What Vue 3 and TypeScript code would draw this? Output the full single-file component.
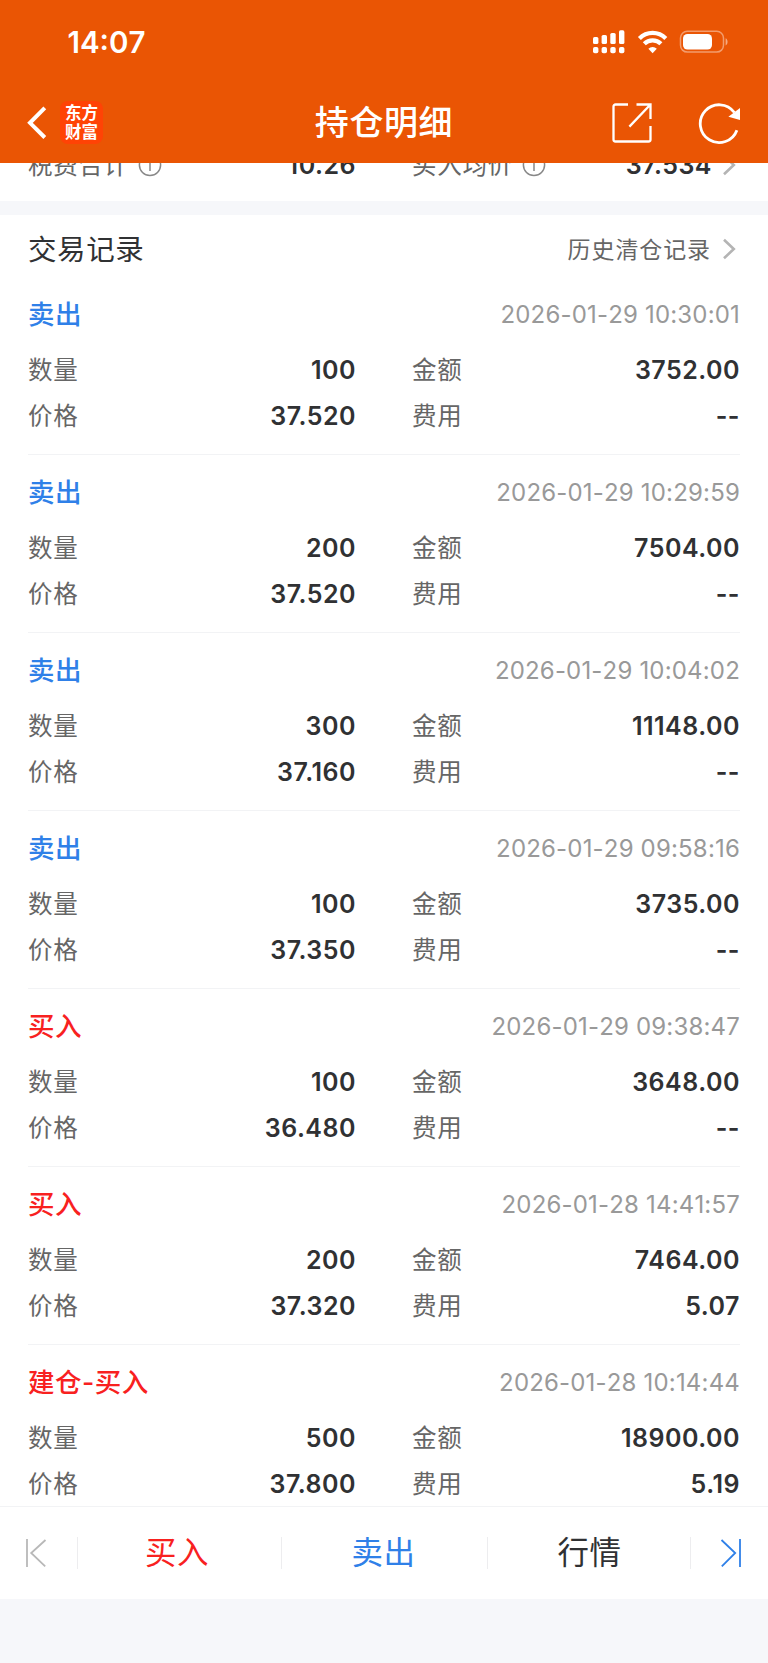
<script setup lang="ts">
interface Trade {
  title: string
  side: 'sell' | 'buy'
  time: string
  quantity: string
  amount: string
  price: string
  fee: string
}

const trades: Trade[] = [
  { title: '卖出', side: 'sell', time: '2026-01-29 10:30:01', quantity: '100', amount: '3752.00', price: '37.520', fee: '--' },
  { title: '卖出', side: 'sell', time: '2026-01-29 10:29:59', quantity: '200', amount: '7504.00', price: '37.520', fee: '--' },
  { title: '卖出', side: 'sell', time: '2026-01-29 10:04:02', quantity: '300', amount: '11148.00', price: '37.160', fee: '--' },
  { title: '卖出', side: 'sell', time: '2026-01-29 09:58:16', quantity: '100', amount: '3735.00', price: '37.350', fee: '--' },
  { title: '买入', side: 'buy', time: '2026-01-29 09:38:47', quantity: '100', amount: '3648.00', price: '36.480', fee: '--' },
  { title: '买入', side: 'buy', time: '2026-01-28 14:41:57', quantity: '200', amount: '7464.00', price: '37.320', fee: '5.07' },
  { title: '建仓-买入', side: 'buy', time: '2026-01-28 10:14:44', quantity: '500', amount: '18900.00', price: '37.800', fee: '5.19' },
]
</script>

<template>
  <div class="screen">
    <header class="header">
      <div class="status">
        <span class="clock">14:07</span>
        <svg class="status-icons" width="138" height="26" viewBox="0 0 138 26" fill="#fff">
          <rect x="1" y="8" width="5.4" height="7" rx="1.6" />
          <rect x="9.6" y="6" width="5.4" height="9" rx="1.6" />
          <rect x="18.3" y="4" width="5.4" height="11" rx="1.6" />
          <rect x="27" y="1.3" width="5.4" height="13.7" rx="1.6" />
          <rect x="1" y="18" width="5.4" height="6.3" rx="1.8" />
          <rect x="9.6" y="18" width="5.4" height="6.3" rx="1.8" />
          <rect x="18.3" y="18" width="5.4" height="6.3" rx="1.8" />
          <rect x="27" y="18" width="5.4" height="6.3" rx="1.8" />
          <g fill="none" stroke="#fff" stroke-width="4.2">
            <path d="M47.4 9.4a18.6 18.6 0 0 1 26.4 0" />
            <path d="M52.3 14.8a11.7 11.7 0 0 1 16.6 0" />
          </g>
          <path d="M56.4 19.8a6 6 0 0 1 8.4 0l-4.2 4.4z" />
          <rect x="88.5" y="2.3" width="43" height="20.8" rx="6.8" fill="none" stroke="#fff" stroke-opacity=".42" stroke-width="1.5" />
          <rect x="91" y="5" width="29" height="15.5" rx="4.5" />
          <path d="M133.6 9.2c2.6 1.2 2.6 6 0 7.2z" opacity=".5" />
        </svg>
      </div>
      <div class="nav">
        <div class="nav-left">
          <svg width="20" height="34" viewBox="0 0 20 34" fill="none" stroke="#fff" stroke-width="4">
            <path d="M17.8 1.8 3 16.8l14.8 14.7" />
          </svg>
          <div class="brand"><span>东方</span><span>财富</span></div>
        </div>
        <h1 class="title">持仓明细</h1>
        <div class="nav-right">
          <svg width="42" height="42" viewBox="0 0 42 42" fill="none" stroke="#fff" stroke-width="2.3">
            <path d="M17 2.5H4.5a2 2 0 0 0-2 2v33a2 2 0 0 0 2 2h33a2 2 0 0 0 2-2V24M25.5 2.5h14V17M39 3 18.4 24.6" />
          </svg>
          <svg width="44" height="44" viewBox="0 0 44 44" fill="none">
            <path d="M38.9 29.2A18.9 18.9 0 1 1 36.4 11.5" stroke="#fff" stroke-width="2.8" />
            <path d="M42 7v12l-11.6-3.2z" fill="#fff" />
          </svg>
        </div>
      </div>
    </header>

    <main class="content">
      <section class="summary">
        <div class="pair">
          <span class="label">税费合计</span>
          <svg class="info" width="24" height="24" viewBox="0 0 24 24" fill="none" stroke="#888" stroke-width="1.5">
            <circle cx="12" cy="12" r="10.6" /><path d="M12 10v8M12 5.5v2" />
          </svg>
          <span class="value">10.26</span>
        </div>
        <div class="pair">
          <span class="label">买入均价</span>
          <svg class="info" width="24" height="24" viewBox="0 0 24 24" fill="none" stroke="#888" stroke-width="1.5">
            <circle cx="12" cy="12" r="10.6" /><path d="M12 10v8M12 5.5v2" />
          </svg>
          <span class="value">37.534</span>
          <svg class="chevron" width="16" height="22" viewBox="0 0 16 22" fill="none" stroke="#b4b4b4" stroke-width="2.6">
            <path d="m2 1.7 9.8 9.3L2 20.3" />
          </svg>
        </div>
      </section>

      <section class="records">
        <div class="records-head">
          <h2>交易记录</h2>
          <a class="history">
            <span>历史清仓记录</span>
            <svg class="chevron" width="16" height="22" viewBox="0 0 16 22" fill="none" stroke="#b4b4b4" stroke-width="2.6">
              <path d="m2 1.7 9.8 9.3L2 20.3" />
            </svg>
          </a>
        </div>
        <article v-for="trade in trades" :key="trade.time" class="trade">
          <div class="trade-head">
            <strong :class="trade.side">{{ trade.title }}</strong>
            <time>{{ trade.time }}</time>
          </div>
          <div class="fields">
            <div class="pair"><span class="label">数量</span><span class="value">{{ trade.quantity }}</span></div>
            <div class="pair"><span class="label">金额</span><span class="value">{{ trade.amount }}</span></div>
            <div class="pair"><span class="label">价格</span><span class="value">{{ trade.price }}</span></div>
            <div class="pair"><span class="label">费用</span><span class="value">{{ trade.fee }}</span></div>
          </div>
        </article>
      </section>
    </main>

    <footer class="toolbar">
      <button class="step first">
        <svg width="22" height="30" viewBox="0 0 22 30" fill="none" stroke="#b8b8b8" stroke-width="1.8">
          <path d="M2 1v28M20.5 2 6.2 15l14 13.3" />
        </svg>
      </button>
      <button class="action buy"><span>买入</span></button>
      <button class="action sell"><span>卖出</span></button>
      <button class="action quote"><span>行情</span></button>
      <button class="step last">
        <svg width="22" height="30" viewBox="0 0 22 30" fill="none" stroke="#2f80e8" stroke-width="1.8">
          <path d="M20 1v28M1.5 2 15.2 15 1.8 28.3" />
        </svg>
      </button>
    </footer>
  </div>
</template>

<style>
body {
  margin: 0;
  background: #f6f7fa;
}
</style>

<style scoped>
.screen {
  display: flex;
  flex-direction: column;
  width: 768px;
  height: 1663px;
  overflow: hidden;
  background: #f6f7fa;
  color: #303133;
  font-family: Inter, "Noto Sans CJK SC", sans-serif;
  font-kerning: none;
  white-space: nowrap;
}
.header {
  flex: none;
  height: 163px;
  background: #ea5504;
  color: #fff;
}
.status {
  display: flex;
  justify-content: space-between;
  box-sizing: border-box;
  height: 82px;
  padding: 29px 38px 0 67.5px;
}
.clock {
  font-size: 29.5px;
  font-weight: 600;
  line-height: 27px;
}
.nav {
  display: grid;
  grid-template-columns: 1fr auto 1fr;
  align-items: center;
  height: 81px;
}
.nav-left {
  display: flex;
  align-items: center;
  gap: 13px;
  padding-left: 27px;
}
.brand {
  display: flex;
  flex-direction: column;
  align-items: center;
  justify-content: center;
  box-sizing: border-box;
  width: 43px;
  height: 43px;
  padding-bottom: 2px;
  border-radius: 8px;
  background: #ff4305;
  font-family: "Noto Sans CJK SC", sans-serif;
  font-size: 16.5px;
  font-weight: 700;
  line-height: 19px;
}
.title {
  margin: 0;
  font-size: 34px;
  font-weight: 500;
  letter-spacing: 0.6px;
  line-height: 40px;
}
.nav-right {
  display: flex;
  align-items: center;
  justify-content: flex-end;
  gap: 45px;
  padding-right: 26px;
}
.content {
  flex: none;
  height: 1343px;
  overflow: hidden;
}
.summary {
  display: grid;
  grid-template-columns: 1fr 1fr;
  column-gap: 56px;
  box-sizing: border-box;
  height: 56px;
  margin-top: -18px;
  padding: 0 28px 17px;
  background: #fff;
}
.pair {
  display: flex;
  align-items: center;
}
.label {
  padding-bottom: 4px;
  color: #666;
  font-size: 24.5px;
  font-weight: 400;
  letter-spacing: 0.7px;
}
.value {
  margin-left: auto;
  color: #303133;
  font-size: 25px;
  font-weight: 600;
  font-kerning: normal;
  letter-spacing: 0.5px;
}
.summary .label {
  padding-bottom: 2px;
}
.info {
  margin-left: 9px;
}
.chevron {
  flex: none;
  margin-left: 11px;
}
.pair .chevron {
  margin-left: 10px;
  margin-right: 2px;
}
.records {
  height: 1300px;
  margin-top: 14px;
  padding: 0 28px;
  background: #fff;
}
.records-head {
  display: flex;
  align-items: center;
  justify-content: space-between;
  height: 68px;
}
.records-head h2 {
  margin: 0;
  padding-bottom: 3px;
  font-size: 28.5px;
  font-weight: 400;
  letter-spacing: 0.6px;
}
.history {
  display: flex;
  align-items: center;
  padding-right: 2px;
  color: #666;
  font-size: 23px;
  letter-spacing: 0.9px;
}
.history span {
  padding-bottom: 2px;
}
.trade {
  box-sizing: border-box;
  height: 178px;
  padding-top: 8px;
  border-bottom: 1px solid #f2f3f5;
}
.trade:first-of-type {
  height: 172px;
  padding-top: 2px;
}
.trade-head {
  display: flex;
  align-items: center;
  justify-content: space-between;
  height: 57px;
  margin-bottom: 5px;
}
.trade-head strong {
  padding-bottom: 3px;
  font-size: 26.5px;
  font-weight: 500;
  letter-spacing: 0.5px;
}
.trade-head time {
  padding-top: 2px;
  color: #999;
  font-size: 24px;
  letter-spacing: 0.18px;
}
.fields {
  display: grid;
  grid-template-columns: 1fr 1fr;
  grid-auto-rows: 46.3px;
  column-gap: 56px;
}
.buy {
  color: #f8211f;
}
.sell {
  color: #2f80e8;
}
.toolbar {
  display: grid;
  grid-template-columns: 78px 204px 206px 203px 77px;
  flex: none;
  align-items: center;
  box-sizing: border-box;
  height: 93px;
  border-top: 1px solid #f2f3f5;
  background: #fff;
}
.toolbar button {
  display: flex;
  align-items: center;
  justify-content: center;
  box-sizing: border-box;
  height: 32px;
  padding: 0;
  border: 0;
  border-right: 1px solid #ededef;
  background: none;
  font-family: "Noto Sans CJK SC", sans-serif;
  font-size: 31.5px;
  letter-spacing: 0.5px;
}
.toolbar span {
  padding-bottom: 6px;
}
.toolbar .buy {
  padding-right: 5px;
}
.toolbar .sell {
  padding-right: 2px;
}
.toolbar .last {
  padding-left: 2px;
  border-right: 0;
}
.toolbar .first {
  padding-right: 6px;
}
.toolbar .quote {
  padding-left: 1px;
  color: #303133;
}
</style>
